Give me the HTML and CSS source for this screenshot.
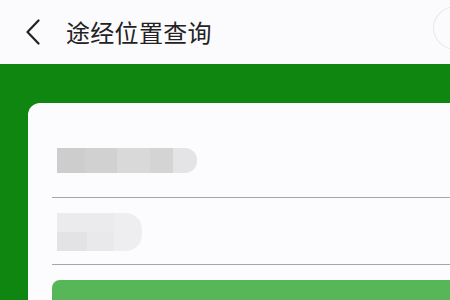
FILE: index.html
```html
<!DOCTYPE html>
<html lang="zh">
<head>
<meta charset="utf-8">
<link rel="stylesheet" href="styles.css">
</head>
<body>
<div class="page">
  <header class="topbar">
    <svg class="back" width="14" height="26" viewBox="0 0 14 26"><path d="M12.5 1.5 L1.5 13 L12.5 24.5" fill="none" stroke="#222" stroke-width="2.2" stroke-linecap="round" stroke-linejoin="round"/></svg>
    <h1 class="title">途经位置查询</h1>
    <span class="capsule"></span>
  </header>
  <main class="green">
    <section class="card">
      <div class="field field-1">
        <span class="blur b1"></span><span class="blur b2"></span><span class="blur b3"></span><span class="blur b4"></span><span class="blur b5"></span>
      </div>
      <div class="field field-2">
        <div class="blk">
          <span class="row r1"></span>
          <span class="row r2"></span>
        </div>
        <span class="blk-end"></span>
      </div>
      <button class="btn">查询</button>
    </section>
  </main>
</div>
</body>
</html>
```
FILE: styles.css
```css
* { box-sizing: border-box; }
html, body { margin: 0; padding: 0; }
body {
  width: 450px;
  height: 300px;
  overflow: hidden;
  background: #fbfbfd;
  font-family: "Noto Sans CJK SC", "Noto Sans", sans-serif;
}
.page { width: 450px; height: 300px; overflow: hidden; display: flex; flex-direction: column; }
.topbar {
  position: relative;
  height: 64px;
  flex: none;
  display: flex;
  align-items: center;
  padding-left: 26px;
  background: #fbfbfd;
}
.back { display: block; margin-top: 0; }
.title {
  margin: 0 0 0 26px;
  font-size: 24px;
  font-weight: 400;
  color: #222;
  line-height: 1;
  letter-spacing: 0.3px;
}
.capsule {
  position: absolute;
  left: 433px;
  top: 6px;
  width: 46px;
  height: 44px;
  border-radius: 50%;
  border: 1px solid #e8e8ea;
}
.green {
  flex: 1;
  background: #0e860f;
  padding: 39px 0 0 28px;
  width: 700px;
}
.card {
  width: 560px;
  height: 300px;
  background: #fcfcfe;
  border-radius: 12px 0 0 0;
  padding: 0 0 0 24px;
  display: flex;
  flex-direction: column;
}
.field {
  width: 520px;
  border-bottom: 1.5px solid #a6a6a6;
  display: flex;
  align-items: flex-start;
  padding-left: 5px;
}
.field-1 { height: 95px; padding-top: 45px; }
.field-2 { height: 67px; padding-top: 15px; }
.blur { height: 25px; display: block; }
.b1 { width: 28px; background: #cdcdcd; }
.b2 { width: 32px; background: #d1d1d1; }
.b3 { width: 33px; background: #d9d9d9; }
.b4 { width: 23px; background: #d4d4d4; }
.b5 { width: 24px; background: #e4e4e6; border-radius: 0 12px 12px 0; }
.blk { display: flex; flex-direction: column; width: 57px; }
.row { display: block; height: 19px; }
.r1 { background: #ebebed; }
.r2 { background: linear-gradient(to right, #e3e3e5 0 30px, #e9e9eb 30px); }
.blk-end { display: block; width: 28px; height: 38px; background: #eeeef0; border-radius: 0 16px 16px 0; }
.btn {
  margin-top: 15px;
  width: 500px;
  height: 50px;
  border: none;
  border-radius: 8px;
  background: #57b758;
  color: #fff;
  font-family: inherit;
  font-size: 24px;
  line-height: 1;
  padding: 12px 0 0 0;
  display: block;
  text-align: center;
  align-self: flex-start;
}
```
